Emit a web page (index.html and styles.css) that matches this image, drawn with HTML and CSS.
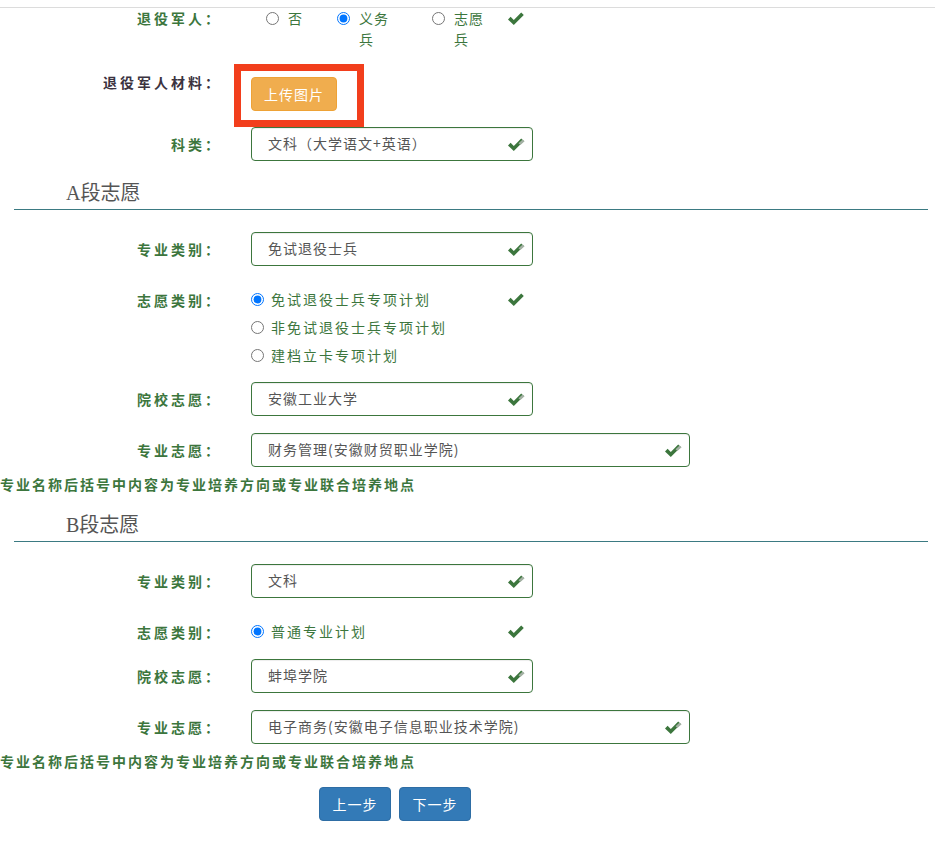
FILE: index.html
```html
<!DOCTYPE html>
<html lang="zh-CN">
<head>
<meta charset="utf-8">
<title>志愿填报</title>
<link rel="stylesheet" href="styles.css">
</head>
<body>
<div class="topline"></div>
<form class="form">
  <div class="row r1">
    <label class="lbl">退役军人：</label>
    <div class="ctl radios-inline">
      <label class="ri"><input type="radio" name="ty"><span>否</span></label>
      <label class="ri"><input type="radio" name="ty" checked><span>义务兵</span></label>
      <label class="ri"><input type="radio" name="ty"><span>志愿兵</span></label>
      <span class="fb fb-r1"><svg width="16" height="13" viewBox="0 0 16 13"><polygon points="0,7.5 2.6,4.8 5.8,8 13.2,0.5 15.8,3.1 5.8,13" fill="#3c763d"/></svg></span>
    </div>
  </div>

  <div class="row r2">
    <label class="lbl dark">退役军人材料：</label>
    <div class="ctl">
      <div class="annot"><button type="button" class="btn btn-warn">上传图片</button></div>
    </div>
  </div>

  <div class="row r3">
    <label class="lbl">科类：</label>
    <div class="ctl">
      <div class="sel">文科（大学语文+英语）</div>
      <span class="fb"><svg width="17" height="13" viewBox="0 0 17 13"><polygon points="0,7.5 2.6,4.8 5.8,8 13.2,0.5 15.8,3.1 5.8,13" fill="#3c763d"/><polygon points="10.5,5.2 14.6,1.4 16.6,3.2 12.4,7.1" fill="#a3b0a3"/></svg></span>
    </div>
  </div>

  <h4 class="h">A段志愿</h4>

  <div class="row group">
    <label class="lbl">专业类别：</label>
    <div class="ctl">
      <div class="sel">免试退役士兵</div>
      <span class="fb"><svg width="17" height="13" viewBox="0 0 17 13"><polygon points="0,7.5 2.6,4.8 5.8,8 13.2,0.5 15.8,3.1 5.8,13" fill="#3c763d"/><polygon points="10.5,5.2 14.6,1.4 16.6,3.2 12.4,7.1" fill="#a3b0a3"/></svg></span>
    </div>
  </div>

  <div class="row group">
    <label class="lbl">志愿类别：</label>
    <div class="ctl radios">
      <label class="rb"><input type="radio" name="a" checked><span>免试退役士兵专项计划</span></label>
      <label class="rb"><input type="radio" name="a"><span>非免试退役士兵专项计划</span></label>
      <label class="rb"><input type="radio" name="a"><span>建档立卡专项计划</span></label>
      <span class="fb fb-rb"><svg width="16" height="13" viewBox="0 0 16 13"><polygon points="0,7.5 2.6,4.8 5.8,8 13.2,0.5 15.8,3.1 5.8,13" fill="#3c763d"/></svg></span>
    </div>
  </div>

  <div class="row group">
    <label class="lbl">院校志愿：</label>
    <div class="ctl">
      <div class="sel">安徽工业大学</div>
      <span class="fb"><svg width="17" height="13" viewBox="0 0 17 13"><polygon points="0,7.5 2.6,4.8 5.8,8 13.2,0.5 15.8,3.1 5.8,13" fill="#3c763d"/><polygon points="10.5,5.2 14.6,1.4 16.6,3.2 12.4,7.1" fill="#a3b0a3"/></svg></span>
    </div>
  </div>

  <div class="row group">
    <label class="lbl">专业志愿：</label>
    <div class="ctl wide">
      <div class="sel">财务管理(安徽财贸职业学院)</div>
      <span class="fb"><svg width="17" height="13" viewBox="0 0 17 13"><polygon points="0,7.5 2.6,4.8 5.8,8 13.2,0.5 15.8,3.1 5.8,13" fill="#3c763d"/><polygon points="10.5,5.2 14.6,1.4 16.6,3.2 12.4,7.1" fill="#a3b0a3"/></svg></span>
    </div>
  </div>

  <p class="note">专业名称后括号中内容为专业培养方向或专业联合培养地点</p>

  <h4 class="h">B段志愿</h4>

  <div class="row group">
    <label class="lbl">专业类别：</label>
    <div class="ctl">
      <div class="sel">文科</div>
      <span class="fb"><svg width="17" height="13" viewBox="0 0 17 13"><polygon points="0,7.5 2.6,4.8 5.8,8 13.2,0.5 15.8,3.1 5.8,13" fill="#3c763d"/><polygon points="10.5,5.2 14.6,1.4 16.6,3.2 12.4,7.1" fill="#a3b0a3"/></svg></span>
    </div>
  </div>

  <div class="row group">
    <label class="lbl">志愿类别：</label>
    <div class="ctl radios">
      <label class="rb"><input type="radio" name="b" checked><span>普通专业计划</span></label>
      <span class="fb fb-rb"><svg width="16" height="13" viewBox="0 0 16 13"><polygon points="0,7.5 2.6,4.8 5.8,8 13.2,0.5 15.8,3.1 5.8,13" fill="#3c763d"/></svg></span>
    </div>
  </div>

  <div class="row group">
    <label class="lbl">院校志愿：</label>
    <div class="ctl">
      <div class="sel">蚌埠学院</div>
      <span class="fb"><svg width="17" height="13" viewBox="0 0 17 13"><polygon points="0,7.5 2.6,4.8 5.8,8 13.2,0.5 15.8,3.1 5.8,13" fill="#3c763d"/><polygon points="10.5,5.2 14.6,1.4 16.6,3.2 12.4,7.1" fill="#a3b0a3"/></svg></span>
    </div>
  </div>

  <div class="row group">
    <label class="lbl">专业志愿：</label>
    <div class="ctl wide">
      <div class="sel">电子商务(安徽电子信息职业技术学院)</div>
      <span class="fb"><svg width="17" height="13" viewBox="0 0 17 13"><polygon points="0,7.5 2.6,4.8 5.8,8 13.2,0.5 15.8,3.1 5.8,13" fill="#3c763d"/><polygon points="10.5,5.2 14.6,1.4 16.6,3.2 12.4,7.1" fill="#a3b0a3"/></svg></span>
    </div>
  </div>

  <p class="note">专业名称后括号中内容为专业培养方向或专业联合培养地点</p>

  <div class="actions">
    <button type="button" class="btn btn-primary">上一步</button>
    <button type="button" class="btn btn-primary">下一步</button>
  </div>
</form>
</body>
</html>
```

FILE: styles.css
```css
* { box-sizing: border-box; }

html, body {
  margin: 0;
  padding: 0;
  background: #fff;
}

body {
  font-family: "Noto Sans CJK SC", "Liberation Sans", sans-serif;
  font-size: 14px;
  color: #333;
}

.topline {
  margin-top: 7px;
  height: 1px;
  background: #dcdcdc;
}

.form {
  margin: 0;
  padding: 0;
}

.row {
  display: flex;
  align-items: flex-start;
}

.lbl {
  width: 222px;
  margin-right: 29px;
  flex: none;
  text-align: right;
  font-weight: bold;
  letter-spacing: 3px;
  line-height: 20px;
  padding-top: 7px;
  color: #3c763d;
}

.lbl.dark {
  color: #3b3340;
  padding-top: 8px;
}

.r1 .lbl { padding-top: 0; }

.r2 { margin-top: 14px; }

.ctl {
  position: relative;
  width: 282px;
  flex: none;
}

.ctl.wide { width: 439px; }

.sel {
  height: 34px;
  border: 1px solid #3c763d;
  border-radius: 4px;
  box-shadow: inset 0 1px 1px rgba(0, 0, 0, .075);
  padding-left: 16px;
  line-height: 31px;
  color: #555;
  letter-spacing: 1px;
  background: #fff;
  white-space: nowrap;
}

.fb {
  position: absolute;
  right: 0;
  top: 0;
  width: 34px;
  height: 34px;
  display: flex;
  align-items: center;
  justify-content: center;
}

.fb svg { display: block; }

.fb-r1 { height: 21px; }

.fb-rb { top: 6px; height: 20px; }

/* inline radios (first row) */
.radios-inline {
  display: grid;
  grid-template-columns: 71px 95px 1fr;
  padding-left: 15px;
}

.ri {
  display: flex;
  align-items: flex-start;
  color: #3c763d;
  line-height: 21px;
  letter-spacing: 1px;
}

.ri span { width: 32px; }

input[type="radio"] {
  width: 13px;
  height: 13px;
  flex: none;
}

.ri input {
  margin: 4px 9px 0 0;
}

/* stacked radios */
.radios {
  padding-top: 6px;
}

.rb {
  display: flex;
  align-items: flex-start;
  color: #3c763d;
  line-height: 20px;
  letter-spacing: 2px;
  margin-bottom: 8px;
}

.rb:last-of-type { margin-bottom: 0; }

.rb input {
  margin: 4px 7px 0 0;
}

/* annotation around upload */
.annot {
  display: inline-block;
  margin-left: -17px;
  border: 7px solid #f23e1c;
  padding: 6px 20px 9px 10px;
}

.btn {
  display: inline-block;
  height: 34px;
  border-radius: 4px;
  border: 1px solid transparent;
  color: #fff;
  font-family: "Noto Sans CJK SC", "Liberation Sans", sans-serif;
  font-size: 14px;
  letter-spacing: 1px;
  padding: 0;
  cursor: pointer;
}

.btn-warn {
  width: 86px;
  background: #f0ad4e;
  border-color: #eea236;
}

.btn-primary {
  width: 72px;
  background: #337ab7;
  border-color: #2e6da4;
}

/* section headings */
.h {
  margin: 20px 7px 0 14px;
  padding: 0 0 4px 52px;
  font-family: "Liberation Serif", "Noto Sans CJK SC", serif;
  font-weight: normal;
  font-size: 20px;
  line-height: 24px;
  color: #555;
  border-bottom: 1px solid #3b7a82;
}

.note + .h { margin-top: 19px; }

.group { margin-top: 17px; }

.h + .group { margin-top: 22px; }

.note {
  margin: 7px 0 0 0;
  font-weight: bold;
  line-height: 20px;
  letter-spacing: 2px;
  color: #3c763d;
}

.actions {
  margin-top: 16px;
  padding-left: 319px;
  display: flex;
  gap: 8px;
}
```
